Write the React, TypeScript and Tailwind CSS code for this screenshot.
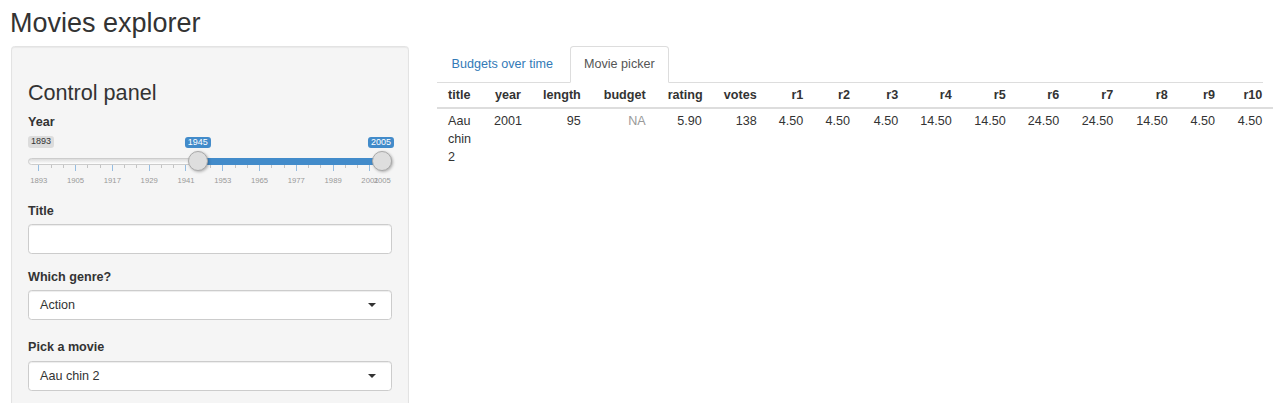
import React from "react";

const YEAR_MIN = 1893;
const STEP = 343.4 / 112;
const majorYears = [1893, 1905, 1917, 1929, 1941, 1953, 1965, 1977, 1989, 2001, 2005];

const columns = [
  { name: "title", width: 46 },
  { name: "year", width: 49 },
  { name: "length", width: 59.7 },
  { name: "budget", width: 65 },
  { name: "rating", width: 56 },
  { name: "votes", width: 55 },
  { name: "r1", width: 46.6 },
  { name: "r2", width: 46.7 },
  { name: "r3", width: 48.3 },
  { name: "r4", width: 53.4 },
  { name: "r5", width: 54 },
  { name: "r6", width: 53.6 },
  { name: "r7", width: 54 },
  { name: "r8", width: 54.4 },
  { name: "r9", width: 47.3 },
  { name: "r10", width: 47.3 },
];

const movieRow = [
  "Aau chin 2",
  "2001",
  "95",
  "NA",
  "5.90",
  "138",
  "4.50",
  "4.50",
  "4.50",
  "14.50",
  "14.50",
  "24.50",
  "24.50",
  "14.50",
  "4.50",
  "4.50",
];

function px(year: number) {
  return 10.3 + (year - YEAR_MIN) * STEP;
}

function YearSlider({ from, to }: { from: number; to: number }) {
  const minorYears: number[] = [];
  for (let y = 1893; y < 2001; y += 12) {
    minorYears.push(y + 4, y + 8);
  }

  return (
    <div className="relative mb-[14px] h-[52px]">
      <span className="absolute left-0 top-0 rounded-[3px] bg-black/10 px-[3px] text-[9px] leading-[11.5px] text-[#333]">
        1893
      </span>
      <span
        className="absolute top-px -translate-x-1/2 rounded-[3px] bg-[#428bca] px-[3px] text-[9px] leading-[11px] text-white"
        style={{ left: px(from) }}
      >
        {from}
      </span>
      <span
        className="absolute top-px -translate-x-1/2 rounded-[3px] bg-[#428bca] px-[3px] text-[9px] leading-[11px] text-white"
        style={{ left: px(to) - 0.7 }}
      >
        {to}
      </span>

      <div className="absolute left-0 right-0 top-[22px] h-[7px] rounded-full border border-[#ccc] bg-linear-to-b from-[#dcdcdc] to-white" />
      <div
        className="absolute top-[22px] h-[7px] bg-[#428bca]"
        style={{ left: px(from), width: px(to) - px(from) }}
      />

      {majorYears.map((y) => (
        <div
          key={`t${y}`}
          className="absolute top-[29px] h-[6px] w-px bg-[#95bde2]"
          style={{ left: px(y) }}
        />
      ))}
      {minorYears.map((y) => (
        <div
          key={`m${y}`}
          className="absolute top-[29px] h-[3px] w-px bg-[#c4c4c4]"
          style={{ left: px(y) }}
        />
      ))}
      {majorYears.map((y) => (
        <span
          key={`l${y}`}
          className="absolute top-[40px] -translate-x-1/2 text-[7.7px] leading-[10px] text-[#999]"
          style={{ left: px(y) + 0.5 }}
        >
          {y}
        </span>
      ))}

      {[from, to].map((y) => (
        <div
          key={`h${y}`}
          className="absolute top-[15px] h-[20px] w-[20px] rounded-full border border-[#aaa] bg-[#dedede] shadow-[1px_1px_3px_rgba(0,0,0,0.3)]"
          style={{ left: px(y) - 10 }}
        />
      ))}
    </div>
  );
}

function SelectBox({ value }: { value: string }) {
  return (
    <div className="flex h-[30px] w-full items-center justify-between rounded-[3.6px] border border-[#ccc] bg-white pl-[11px] pr-[15px] shadow-[inset_0_1px_1px_rgba(0,0,0,0.075)]">
      <span>{value}</span>
      <span className="h-0 w-0 border-x-[4.5px] border-t-[4.5px] border-x-transparent border-t-[#333]" />
    </div>
  );
}

function ControlPanel() {
  const labelStyle = "block font-bold";

  return (
    <div className="w-[398px] shrink-0 self-start rounded-[3.6px] border border-[#e3e3e3] bg-[#f5f5f5] px-[16px] pb-[20px] pt-[16px] shadow-[inset_0_1px_1px_rgba(0,0,0,0.05)]">
      <h3 className="mb-[8px] mt-[18px] text-[21.6px] font-normal leading-[24px]">
        Control panel
      </h3>
      <label className={`${labelStyle} mb-[5px]`}>Year</label>
      <YearSlider from={1945} to={2005} />

      <label className={`${labelStyle} mb-[4px]`}>Title</label>
      <input
        type="text"
        className="mb-[14px] block h-[30px] w-full rounded-[3.6px] border border-[#ccc] bg-white px-[11px] shadow-[inset_0_1px_1px_rgba(0,0,0,0.075)] outline-none"
      />

      <label className={`${labelStyle} mb-[4px]`}>Which genre?</label>
      <div className="mb-[18px]">
        <SelectBox value="Action" />
      </div>

      <label className={`${labelStyle} mb-[5px]`}>Pick a movie</label>
      <div className="mb-[18px]">
        <SelectBox value="Aau chin 2" />
      </div>
    </div>
  );
}

function MoviesTable() {
  return (
    <table
      className="table-fixed border-collapse"
      style={{ width: columns.reduce((sum, c) => sum + c.width, 0) }}
    >
      <colgroup>
        {columns.map((c) => (
          <col key={c.name} style={{ width: c.width }} />
        ))}
      </colgroup>
      <thead>
        <tr>
          {columns.map((c, i) => (
            <th
              key={c.name}
              className={`border-b-2 border-[#ddd] px-[11px] pb-[3px] pt-[3px] align-bottom font-bold ${
                i === 0 ? "text-left" : "text-right"
              }`}
            >
              {c.name}
            </th>
          ))}
        </tr>
      </thead>
      <tbody>
        <tr>
          {movieRow.map((value, i) => (
            <td
              key={columns[i].name}
              className={`px-[11px] pt-[3px] align-top ${i === 0 ? "text-left" : "text-right"} ${
                value === "NA" ? "text-[#999]" : ""
              }`}
            >
              {value}
            </td>
          ))}
        </tr>
      </tbody>
    </table>
  );
}

export default function App() {
  return (
    <div className="h-[403px] overflow-hidden bg-white px-[11px] font-['Liberation_Sans',Arial,sans-serif] text-[12.6px] leading-[18px] text-[#333]">
      <h2 className="-ml-px mb-[8px] pt-[8px] text-[27px] font-normal leading-[30px]">
        Movies explorer
      </h2>
      <div className="flex gap-[28px]">
        <ControlPanel />
        <div className="w-[826px] shrink-0">
          <ul className="flex border-b border-[#ddd]">
            <li className="-mb-px mr-[2px]">
              <a className="block rounded-t-[3.6px] border border-transparent px-[13.5px] pb-[9px] pt-[8px] text-[#337ab7]">
                Budgets over time
              </a>
            </li>
            <li className="-mb-px">
              <a className="block rounded-t-[3.6px] border border-[#ddd] border-b-transparent bg-white px-[13.5px] pb-[9px] pt-[8px] text-[#555]">
                Movie picker
              </a>
            </li>
          </ul>
          <MoviesTable />
        </div>
      </div>
    </div>
  );
}
